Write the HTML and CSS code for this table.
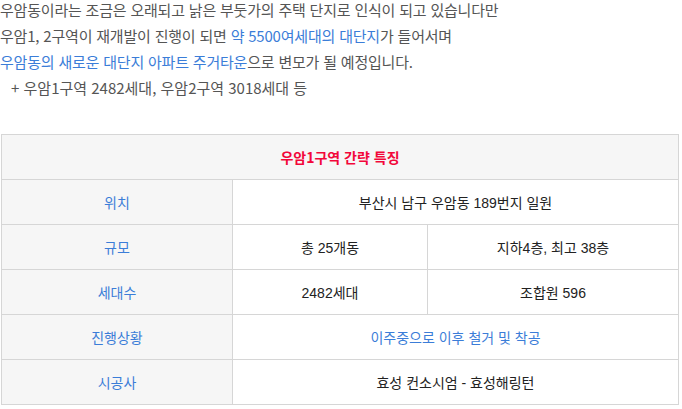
FILE: index.html
```html
<!DOCTYPE html>
<html lang="ko">
<head>
<meta charset="utf-8">
<link rel="stylesheet" href="styles.css">
</head>
<body>
<div class="intro">
  <p>우암동이라는 조금은 오래되고 낡은 부둣가의 주택 단지로 인식이 되고 있습니다만</p>
  <p>우암1, 2구역이 재개발이 진행이 되면 <span class="hl">약 5500여세대의 대단지</span>가 들어서며</p>
  <p><span class="hl">우암동의 새로운 대단지 아파트 주거타운</span>으로 변모가 될 예정입니다.</p>
  <p class="indent">+ 우암1구역 2482세대, 우암2구역 3018세대 등</p>
</div>
<table class="spec">
  <colgroup>
    <col class="c1"><col class="c2"><col class="c3">
  </colgroup>
  <tr><th colspan="3" class="title">우암1구역 간략 특징</th></tr>
  <tr><td class="label">위치</td><td colspan="2">부산시 남구 우암동 189번지 일원</td></tr>
  <tr><td class="label">규모</td><td>총 25개동</td><td>지하4층, 최고 38층</td></tr>
  <tr><td class="label">세대수</td><td>2482세대</td><td>조합원 596</td></tr>
  <tr><td class="label">진행상황</td><td colspan="2" class="blue">이주중으로 이후 철거 및 착공</td></tr>
  <tr><td class="label">시공사</td><td colspan="2">효성 컨소시엄 - 효성해링턴</td></tr>
</table>
</body>
</html>
```

FILE: styles.css
```css
html, body {
  margin: 0;
  padding: 0;
  background: #fff;
}
body {
  font-family: "Noto Sans CJK KR", "Noto Sans", sans-serif;
}
.intro {
  margin-top: -3px;
  color: #555;
  font-size: 15px;
  line-height: 26px;
  letter-spacing: -0.2px;
}
.intro p {
  margin: 0;
}
.intro .indent {
  padding-left: 11px;
  letter-spacing: 0;
}
.hl {
  color: #3b7dd8;
}
.spec {
  margin: 33px 0 0 1px;
  width: 678px;
  border-collapse: collapse;
  table-layout: fixed;
  font-family: "Liberation Sans", "Noto Sans CJK KR", sans-serif;
  font-size: 14px;
  color: #222;
}
.c1 { width: 231px; }
.c2 { width: 195px; }
.spec th, .spec td {
  border: 1px solid #d6d6d6;
  height: 44px;
  padding: 0;
  text-align: center;
  vertical-align: middle;
}
.spec .title {
  background: #f6f6f6;
  color: #f2073a;
  font-weight: bold;
  font-family: "Noto Sans CJK KR", sans-serif;
}
.spec .label {
  background: #f6f6f6;
  color: #3b7dd8;
}
.spec .blue {
  color: #3b7dd8;
}
```
